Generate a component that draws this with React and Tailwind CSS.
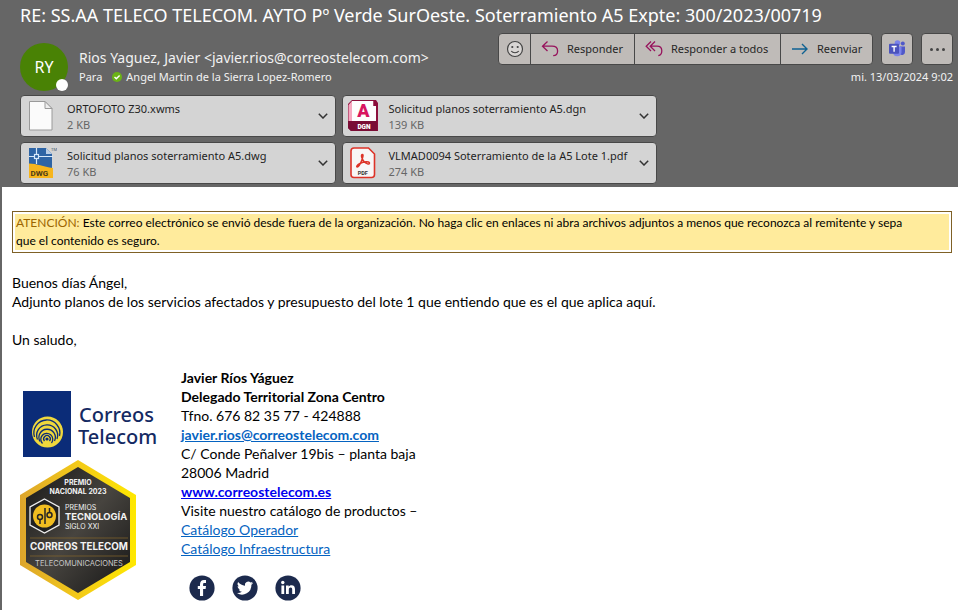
import React from "react";

function ReplyIcon() {
  return (
    <svg width="18" height="18" viewBox="0 0 18 18" fill="none" stroke="#97135c" strokeWidth="1.3" aria-hidden="true">
      <path d="M6.5 1.500 1.500 6.200l5 4.800M1.800 6.200H11c3.600 0 5.600 2 5.600 4.700 0 2.800-1.700 4.700-4.400 4.700" />
    </svg>
  );
}

function ReplyAllIcon() {
  return (
    <svg width="18" height="18" viewBox="0 0 18 18" fill="none" stroke="#97135c" strokeWidth="1.3" aria-hidden="true">
      <path d="M6 1.500 1.200 6.200 6 11M10 1.500 5.200 6.200 10 11M5.500 6.200H12c3.200 0 4.800 2 4.800 4.500 0 2.800-1.300 4.500-3.500 4.900" />
    </svg>
  );
}

function ForwardIcon() {
  return (
    <svg width="18" height="18" viewBox="0 0 18 18" fill="none" stroke="#0f6292" strokeWidth="1.4" aria-hidden="true">
      <path d="M1 9h15M11 4l5 5-5 5" />
    </svg>
  );
}

function SmileIcon() {
  return (
    <svg width="18" height="18" viewBox="0 0 18 18" fill="none" stroke="#444" strokeWidth="1.2" aria-hidden="true">
      <circle cx="9" cy="9" r="7.5" fill="#d9d6d4" />
      <circle cx="6.3" cy="7" r="1.1" fill="#444" stroke="none" />
      <circle cx="11.7" cy="7" r="1.1" fill="#444" stroke="none" />
      <path d="M5.200 11c1.800 2.300 5.800 2.300 7.600 0" />
    </svg>
  );
}

function TeamsIcon() {
  return (
    <svg width="18" height="18" viewBox="0 0 18 18" aria-hidden="true">
      <circle cx="14.8" cy="3.4" r="2" fill="#5059c9" />
      <circle cx="9.5" cy="3" r="2.8" fill="#7b83eb" />
      <path d="M12 6.500h5v5.500a3 3 0 0 1-5 2.200z" fill="#5059c9" />
      <path d="M5 6.500h8.500v6A4.300 4.300 0 0 1 5 12.800z" fill="#7b83eb" />
      <rect x="1" y="3.800" width="10" height="10" rx="1" fill="#4b53bc" />
      <path d="M3.600 6.500h5M6.100 6.500v5.300" stroke="#fff" strokeWidth="1.4" />
    </svg>
  );
}

function Chevron() {
  return (
    <svg width="10" height="6" viewBox="0 0 10 6" fill="none" stroke="#333" strokeWidth="1.5" aria-hidden="true">
      <path d="M.8.8 5 5 9.200.8" />
    </svg>
  );
}

function BlankFileIcon() {
  return (
    <svg width="32" height="34" viewBox="0 0 32 34" aria-hidden="true">
      <path d="M4.500 2.500h15.500l7 7v21.500H4.500z" fill="#fbfbfb" stroke="#9a9a9a" />
      <path d="M20 2.500v7h7z" fill="#eee" stroke="#9a9a9a" />
    </svg>
  );
}

function DwgIcon() {
  return (
    <svg width="32" height="34" viewBox="0 0 32 34" aria-hidden="true">
      <path d="M4 2h17l6 6v19H4z" fill="#2d64a5" />
      <path d="m21 2 6 6h-6z" fill="#b9cde5" />
      <path d="M4 17.500c8 .3 14 3 24 4.500v10H4z" fill="#f7b51c" />
      <path d="M4 10.500h24M11.500 2v16" stroke="#d6e8fa" strokeWidth="1.2" />
      <rect x="9.5" y="8.5" width="4" height="4" fill="#2d64a5" stroke="#d6e8fa" strokeWidth="1.2" />
      <text x="5.5" y="29.5" fontSize="8" fontWeight="700" fontFamily="Roboto, sans-serif" fill="#4a3a18">DWG</text>
      <text x="26" y="5" fontSize="4" fontFamily="Roboto, sans-serif" fill="#456">TM</text>
    </svg>
  );
}

function DgnIcon() {
  return (
    <svg width="32" height="34" viewBox="0 0 32 34" aria-hidden="true">
      <path d="M1 5 5 1h24l2 3v28H4l-3-3z" fill="#8b0f3c" />
      <path d="M1.500 6 5 2v20H1.500z" fill="#f7a8c0" />
      <path d="M5 2h21.500v5H29v15H5z" fill="#fdfdfd" />
      <path d="M26.500 1.500v5.500H30z" fill="#8b0f3c" />
      <path d="M1 22h29v10H4l-3-3z" fill="#7a0d35" />
      <text x="16.5" y="18" textAnchor="middle" fontSize="18" fontWeight="900" fontFamily="Roboto, sans-serif" fill="#d81460">A</text>
      <text x="17" y="29.5" textAnchor="middle" fontSize="6.5" fontWeight="900" fontFamily="Roboto, sans-serif" fill="#fff">DGN</text>
    </svg>
  );
}

function PdfIcon() {
  return (
    <svg width="32" height="34" viewBox="0 0 32 34" aria-hidden="true">
      <path d="M7 2h14.500l6 6v20.500a3 3 0 0 1-3 3H7a3 3 0 0 1-3-3V5a3 3 0 0 1 3-3z" fill="#f8f6f6" stroke="#dd3328" strokeWidth="1.6" />
      <path d="M15.500 8.500c-2 0-.7 4.500 1.500 7 2 2.300 5.500 3.500 5.500 1.600 0-2-6-1.500-9.500.4-3.200 1.700-4 3.500-2.600 3.600 2.200 0 7.200-12.600 5.100-12.600z" fill="none" stroke="#dd3328" strokeWidth="1.5" />
      <text x="15.800" y="28.500" textAnchor="middle" fontSize="5.5" fontWeight="700" fontFamily="Roboto, sans-serif" fill="#333">PDF</text>
    </svg>
  );
}

const attachments = [
  { name: "ORTOFOTO Z30.xwms", size: "2 KB", Icon: BlankFileIcon },
  { name: "Solicitud planos soterramiento A5.dgn", size: "139 KB", Icon: DgnIcon },
  { name: "Solicitud planos soterramiento A5.dwg", size: "76 KB", Icon: DwgIcon },
  { name: "VLMAD0094 Soterramiento de la A5 Lote 1.pdf", size: "274 KB", Icon: PdfIcon },
];

function Attachment({ name, size, Icon }) {
  return (
    <button type="button" className="flex h-[42px] min-w-0 items-center rounded border border-[#484848] bg-[#d4d4d4] pr-[7px] pl-1 text-left">
      <span className="shrink-0"><Icon /></span>
      <span className="ml-[10px] min-w-0 flex-1 pt-[2px] text-[11px] leading-4 whitespace-nowrap">
        <span className="block text-[#1f1f1f]">{name}</span>
        <span className="block text-[#666]">{size}</span>
      </span>
      <Chevron />
    </button>
  );
}

function CorreosLogo() {
  return (
    <svg width="140" height="68" viewBox="0 0 140 68" role="img" aria-label="Correos Telecom" className="ml-[2px]">
      <rect x="1" y="1" width="48" height="66" fill="#0b2c78" />
      <circle cx="25.5" cy="42" r="15.5" fill="#f0d83c" />
      <g fill="none" stroke="#0b2c78" strokeWidth="1.3">
        <path d="M12.500 47a13 13 0 1 1 25-1" />
        <path d="M15.500 49.500a10.500 10.500 0 1 1 19.500-.5" />
        <path d="M18 51.500a8.200 8.200 0 1 1 14.500-.5" />
        <path d="M20.500 53.500a6 6 0 1 1 9-.5" />
        <path d="M22.500 51a3.300 3.300 0 1 1 5 0" />
      </g>
      <circle cx="25" cy="49" r="1.6" fill="#0b2c78" />
      <g fontFamily="'Noto Sans', sans-serif" fontSize="20" fontWeight="500" fill="#142a63">
        <text x="57" y="32">Correos</text>
        <text x="56" y="54">Telecom</text>
      </g>
    </svg>
  );
}

function AwardBadge() {
  return (
    <svg width="118" height="142" viewBox="0 0 118 142" role="img" aria-label="Premio Nacional 2023">
      <defs>
        <linearGradient id="gold" x1="0" x2="1" y1="0" y2="0">
          <stop offset="0" stopColor="#dda52c" />
          <stop offset=".5" stopColor="#f3ca18" />
          <stop offset="1" stopColor="#ffe800" />
        </linearGradient>
        <linearGradient id="slate" x1="0" x2="1" y1="0" y2="1">
          <stop offset="0" stopColor="#171717" />
          <stop offset=".5" stopColor="#47443f" />
          <stop offset="1" stopColor="#151515" />
        </linearGradient>
      </defs>
      <path d="m58 0 58 35v70l-58 35L0 105V35z" fill="url(#gold)" />
      <path d="m58 7 52 31v64l-52 31L6 102V38z" fill="url(#slate)" />
      <path d="m24.500 39 14.500 8v18l-14.500 8L10 65V47z" fill="#202020" stroke="#eee" strokeWidth="1.3" />
      <circle cx="24.5" cy="56" r="11.5" fill="#f1bd20" />
      <g fill="none" stroke="#252525" strokeWidth="1.5">
        <path d="M20 60v4M25 64V48M29.500 52v-4" />
        <circle cx="20" cy="57" r="2.5" />
        <circle cx="29.5" cy="55" r="2.5" />
      </g>
      <g fontFamily="Inter, sans-serif" fill="#f3f3f3">
        <text x="58" y="25" textAnchor="middle" fontSize="7" fontWeight="700">PREMIO</text>
        <text x="58" y="33.5" textAnchor="middle" fontSize="7" fontWeight="700">NACIONAL 2023</text>
        <text x="45" y="50" fontSize="7">PREMIOS</text>
        <text x="45" y="59.5" fontSize="9.4" fontWeight="700">TECNOLOGÍA</text>
        <text x="45" y="68.5" fontSize="7">SIGLO XXI</text>
        <text x="59" y="90" textAnchor="middle" fontSize="9.8" fontWeight="700">CORREOS TELECOM</text>
        <text x="59" y="106" textAnchor="middle" fontSize="7.5" fill="#c9c9c9">TELECOMUNICACIONES</text>
      </g>
      <path d="M10 78h98M10 96h98" stroke="#86672c" strokeWidth=".7" />
    </svg>
  );
}

function SocialLinks() {
  return (
    <div className="mt-[17px] ml-2 flex gap-[17px]">
      <a href="#facebook" aria-label="Facebook">
        <svg width="26" height="26" viewBox="0 0 26 26" className="block" aria-hidden="true">
          <circle cx="13" cy="13" r="12.6" fill="#1c2a4d" />
          <path d="M11 21v-7H8.800v-3H11V9.200C11 6.500 12.600 5 15 5h2v3h-1.400c-1.100 0-1.500.5-1.500 1.400V11H17l-.4 3h-2.500v7z" fill="#fff" />
        </svg>
      </a>
      <a href="#twitter" aria-label="Twitter">
        <svg width="26" height="26" viewBox="0 0 26 26" className="block" aria-hidden="true">
          <circle cx="13" cy="13" r="12.6" fill="#1c2a4d" />
          <path transform="translate(5 5) scale(.67)" d="M24 4.600a10 10 0 0 1-2.800.8 5 5 0 0 0 2.200-2.700 10 10 0 0 1-3.100 1.200 4.900 4.900 0 0 0-8.400 4.500A14 14 0 0 1 1.700 3.100a4.900 4.900 0 0 0 1.500 6.600 5 5 0 0 1-2.200-.6 4.900 4.900 0 0 0 4 4.900 5 5 0 0 1-2.300.1 4.900 4.900 0 0 0 4.600 3.400A10 10 0 0 1 0 19.500 14 14 0 0 0 21.500 7.100 10 10 0 0 0 24 4.600z" fill="#fff" />
        </svg>
      </a>
      <a href="#linkedin" aria-label="LinkedIn">
        <svg width="26" height="26" viewBox="0 0 26 26" className="block" aria-hidden="true">
          <circle cx="13" cy="13" r="12.6" fill="#1c2a4d" />
          <g fill="#fff">
            <circle cx="7.8" cy="7.5" r="1.7" />
            <path d="M6.400 10.500h2.800v8.500H6.400zM11 10.500h2.700v1.200c.6-1 1.500-1.500 2.800-1.500 2.500 0 3.500 1.500 3.500 4.200V19h-2.800v-4.200c0-1.400-.4-2.200-1.500-2.200-1.200 0-1.900.8-1.900 2.300V19H11z" />
          </g>
        </svg>
      </a>
    </div>
  );
}

const action = "flex items-center border-r border-[#484848] text-[11px] text-[#262626] last:border-r-0";

export default function App() {
  return (
    <div className="min-h-screen bg-[#666] font-['Noto_Sans','Open_Sans',sans-serif]">
      <header className="pr-[5px] pb-[3px] pl-5">
        <h1 className="h-[33px] pt-[3px] text-[18px] leading-6 whitespace-nowrap text-white">
          RE: SS.AA TELECO TELECOM. AYTO Pº Verde SurOeste. Soterramiento A5 Expte: 300/2023/00719
        </h1>
        <div className="flex h-[62px] justify-between">
          <div className="flex pt-[10px]">
            <div className="relative flex size-12 items-center justify-center rounded-full bg-[#498205] text-base text-white">
              RY
              <span className="absolute right-0 bottom-0 size-3 rounded-full bg-white" />
            </div>
            <div className="ml-[11px] pt-[5px] whitespace-nowrap text-[#f2f2f2]">
              <p className="text-sm leading-5">Rios Yaguez, Javier &lt;javier.rios@correostelecom.com&gt;</p>
              <p className="flex items-center text-[11px] leading-[18px]">
                Para
                <svg width="10" height="10" viewBox="0 0 10 10" className="mr-1 ml-[10px]" aria-hidden="true">
                  <circle cx="5" cy="5" r="5" fill="#6bb316" />
                  <path d="m2.500 5 1.800 1.800L7.600 3.400" fill="none" stroke="#fff" strokeWidth="1.4" />
                </svg>
                Angel Martin de la Sierra Lopez-Romero
              </p>
            </div>
          </div>
          <div className="shrink-0">
            <div className="flex gap-2">
              <div className="flex h-8 overflow-hidden rounded border border-[#484848] bg-[#bfbbb8]">
                <button type="button" aria-label="Reaccionar" className={`${action} w-8 justify-center`}><SmileIcon /></button>
                <button type="button" className={`${action} w-[104px] gap-2 pl-[10px]`}><ReplyIcon />Responder</button>
                <button type="button" className={`${action} w-[146px] gap-2 pl-[10px]`}><ReplyAllIcon />Responder a todos</button>
                <button type="button" className={`${action} w-[91px] gap-2 pl-[10px]`}><ForwardIcon />Reenviar</button>
              </div>
              <button type="button" aria-label="Teams" className="flex size-8 items-center justify-center rounded border border-[#484848] bg-[#bfbbb8]"><TeamsIcon /></button>
              <button type="button" aria-label="Más acciones" className="flex size-8 items-center justify-center gap-[3px] rounded border border-[#484848] bg-[#bfbbb8]">
                <span className="size-[3px] rounded-full bg-[#444]" />
                <span className="size-[3px] rounded-full bg-[#444]" />
                <span className="size-[3px] rounded-full bg-[#444]" />
              </button>
            </div>
            <p className="mt-1 text-right text-[11px] leading-4 text-[#f2f2f2]">mi. 13/03/2024 9:02</p>
          </div>
        </div>
        <div className="grid max-w-[637px] grid-cols-2 gap-x-[6px] gap-y-[5px]">
          {attachments.map((a) => <Attachment key={a.name} {...a} />)}
        </div>
      </header>

      <main className="ml-[2px] min-h-[423px] bg-white pt-6 pr-[6px] pl-[10px] font-[Lato,sans-serif] text-sm leading-[19px] text-black">
        <div className="border border-[#7f6126] p-[2px]">
          <p className="bg-[#ffeb9c] px-[1px] text-xs leading-[18px]">
            <span className="text-[#9c6500]">ATENCIÓN:</span> Este correo electrónico se envió desde fuera de la organización. No haga clic en enlaces ni abra archivos adjuntos a menos que reconozca al remitente y sepa<br />
            que el contenido es seguro.
          </p>
        </div>
        <p className="mt-5">Buenos días Ángel,</p>
        <p>Adjunto planos de los servicios afectados y presupuesto del lote 1 que entiendo que es el que aplica aquí.</p>
        <p className="mt-[19px]">Un saludo,</p>
        <div className="mt-[19px] flex">
          <div className="flex w-[169px] shrink-0 flex-col pt-[22px] pl-2">
            <CorreosLogo />
            <div className="mt-[2px]"><AwardBadge /></div>
          </div>
          <address className="not-italic">
            <p className="font-bold">Javier Ríos Yáguez</p>
            <p className="font-bold">Delegado Territorial Zona Centro</p>
            <p>Tfno. 676 82 35 77 - 424888</p>
            <p><a href="mailto:javier.rios@correostelecom.com" className="font-bold text-[#0563c1] underline">javier.rios@correostelecom.com</a></p>
            <p>C/ Conde Peñalver 19bis – planta baja</p>
            <p>28006 Madrid</p>
            <p><a href="#web" className="font-bold text-[#0000ee] underline">www.correostelecom.es</a></p>
            <p>Visite nuestro catálogo de productos –</p>
            <p><a href="#operador" className="text-[#0563c1] underline">Catálogo Operador</a></p>
            <p><a href="#infraestructura" className="text-[#0563c1] underline">Catálogo Infraestructura</a></p>
            <SocialLinks />
          </address>
        </div>
      </main>
    </div>
  );
}
